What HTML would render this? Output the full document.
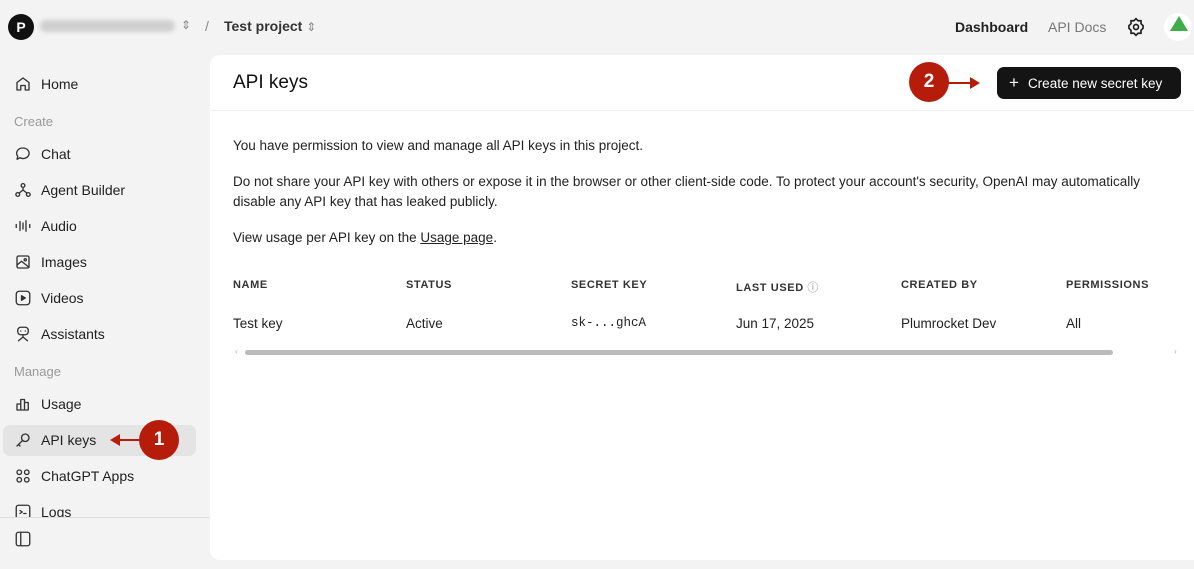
<!DOCTYPE html>
<html><head><meta charset="utf-8"><style>
*{box-sizing:border-box;margin:0;padding:0}
body{width:1194px;height:569px;background:#f3f3f3;font-family:"Liberation Sans",sans-serif;color:#1f1f1f;position:relative;overflow:hidden}
.a{position:absolute}
.nav{position:absolute;left:14px;font-size:14px;display:flex;align-items:center;gap:9px;height:20px;transform:translateY(-10px)}
.nav svg{width:18px;height:18px;fill:none;stroke:#333;stroke-width:1.8;stroke-linecap:round;stroke-linejoin:round}
.lbl{position:absolute;left:14px;font-size:13px;color:#999;transform:translateY(-8px)}
.panel{position:absolute;left:210px;top:55px;width:990px;height:505px;background:#fff;border-radius:10px 0 0 10px}
.p{position:absolute;left:23px;font-size:13.5px;color:#222;line-height:20px}
.th{position:absolute;top:224px;font-size:11px;font-weight:bold;letter-spacing:.6px;color:#333}
.td{position:absolute;top:261px;font-size:13.5px;color:#222}
.badge{position:absolute;width:40px;height:40px;border-radius:50%;background:#b51d0a;color:#fff;font-weight:bold;font-size:19px;display:flex;align-items:center;justify-content:center}
</style></head><body>
<div class="a" style="left:8px;top:14px;width:26px;height:26px;border-radius:50%;background:#111;color:#fff;font-size:14px;font-weight:bold;display:flex;align-items:center;justify-content:center">P</div>
<div class="a" style="left:40px;top:20px;width:135px;height:12px;background:#cfcfcf;border-radius:6px;filter:blur(2px)"></div>
<div class="a" style="left:181px;top:18px;font-size:12px;color:#888">⇕</div>
<div class="a" style="left:205px;top:18px;font-size:14px;color:#888">/</div>
<div class="a" style="left:224px;top:18px;font-size:14px;font-weight:bold;color:#333">Test project <span style="color:#888;font-weight:normal;font-size:12px">⇕</span></div>
<div class="a" style="left:955px;top:19px;font-size:14px;font-weight:bold;color:#222">Dashboard</div>
<div class="a" style="left:1048px;top:19px;font-size:14px;color:#777">API Docs</div>
<svg class="a" style="left:1126px;top:17px" width="20" height="20" viewBox="0 0 24 24" fill="none" stroke="#222" stroke-width="2"><circle cx="12" cy="12" r="3"/><path d="M12 2l2.5 2.5h3.5v3.5L20.5 10.5v3L18 16v3.5h-3.5L12 22l-2.5-2.5H6V16l-2.5-2.5v-3L6 8V4.5h3.5z"/></svg>
<div class="a" style="left:1164px;top:13px;width:28px;height:28px;border-radius:50%;background:#fff"></div>
<div class="a" style="left:1170px;top:16px;width:0;height:0;border-left:9px solid transparent;border-right:9px solid transparent;border-bottom:15px solid #3fae4a"></div>

<div class="nav" style="top:84px"><svg viewBox="0 0 24 24"><path d="M4 20V10l8-6 8 6v10h-5v-6H9v6z"/></svg>Home</div>
<div class="lbl" style="top:122px">Create</div>
<div class="nav" style="top:154px"><svg viewBox="0 0 24 24"><path d="M12 4a8 7 0 1 1-4 13l-4 2 1-4a8 7 0 0 1 7-11z"/></svg>Chat</div>
<div class="nav" style="top:190px"><svg viewBox="0 0 24 24"><circle cx="12" cy="6" r="2.5"/><circle cx="5" cy="18" r="2.5"/><circle cx="19" cy="18" r="2.5"/><path d="M12 9v3M7 16l5-4 5 4"/></svg>Agent Builder</div>
<div class="nav" style="top:226px"><svg viewBox="0 0 24 24"><path d="M3 10v4M8 6v12M12 8v8M16 5v14M21 10v4"/></svg>Audio</div>
<div class="nav" style="top:262px"><svg viewBox="0 0 24 24"><rect x="4" y="4" width="16" height="16" rx="2"/><circle cx="15" cy="9" r="1.5"/><path d="M4 16l6-5 10 8"/></svg>Images</div>
<div class="nav" style="top:298px"><svg viewBox="0 0 24 24"><rect x="3" y="3" width="18" height="18" rx="4"/><path d="M10 9l5 3-5 3z" fill="#333"/></svg>Videos</div>
<div class="nav" style="top:334px"><svg viewBox="0 0 24 24"><rect x="5" y="3" width="14" height="10" rx="4"/><path d="M9 8h.1M15 8h.1M12 13v3M6 21l6-5 6 5"/></svg>Assistants</div>
<div class="lbl" style="top:372px">Manage</div>
<div class="nav" style="top:404px"><svg viewBox="0 0 24 24"><path d="M4 20V12h5V20M9 20V6h5v14M14 20v-10h5v10H4"/></svg>Usage</div>
<div class="a" style="left:3px;top:425px;width:193px;height:31px;background:#e4e4e4;border-radius:7px"></div>
<div class="nav" style="top:440px"><svg viewBox="0 0 24 24"><circle cx="15" cy="9" r="5"/><path d="M11 13l-7 7M6 18l2 2"/></svg>API keys</div>
<div class="nav" style="top:476px"><svg viewBox="0 0 24 24"><circle cx="7" cy="7" r="3"/><circle cx="17" cy="7" r="3"/><circle cx="7" cy="17" r="3"/><circle cx="17" cy="17" r="3"/></svg>ChatGPT Apps</div>
<div class="a" style="left:0;top:500px;width:209px;height:18px;overflow:hidden"><div class="nav" style="top:12px"><svg viewBox="0 0 24 24"><rect x="3" y="3" width="18" height="18" rx="3"/><path d="M8 10l3 2-3 2M13 14h3"/></svg>Logs</div></div>
<div class="a" style="left:0;top:517px;width:209px;height:1px;background:#ddd"></div>
<svg class="a" style="left:14px;top:530px" width="18" height="18" viewBox="0 0 24 24" fill="none" stroke="#333" stroke-width="1.8"><rect x="3" y="3" width="18" height="18" rx="3"/><path d="M9 3v18"/></svg>
<svg class="a" style="left:108px;top:431px" width="34" height="18"><path d="M34 9H10" stroke="#b51d0a" stroke-width="2"/><path d="M2 9l10-6v12z" fill="#b51d0a"/></svg>
<div class="badge" style="left:139px;top:420px">1</div>

<div class="panel">
<div class="a" style="left:23px;top:17px;font-size:19px;color:#111">API keys</div>
<div class="a" style="left:0;top:55px;width:990px;height:1px;background:#eee"></div>
<div class="badge" style="left:699px;top:7px">2</div>
<svg class="a" style="left:738px;top:19px" width="34" height="18"><path d="M0 9h24" stroke="#b51d0a" stroke-width="2"/><path d="M32 9l-10-6v12z" fill="#b51d0a"/></svg>
<div class="a" style="left:787px;top:12px;width:184px;height:32px;background:#141414;border-radius:7px;color:#fff;font-size:13.5px;display:flex;align-items:center;padding-left:12px"><span style="font-size:17px;margin-right:9px">+</span>Create new secret key</div>
<div class="p" style="top:81px">You have permission to view and manage all API keys in this project.</div>
<div class="p" style="top:117px">Do not share your API key with others or expose it in the browser or other client-side code. To protect your account's security, OpenAI may automatically<br>disable any API key that has leaked publicly.</div>
<div class="p" style="top:173px">View usage per API key on the <u>Usage page</u>.</div>
<div class="th" style="left:23px">NAME</div>
<div class="th" style="left:196px">STATUS</div>
<div class="th" style="left:361px">SECRET KEY</div>
<div class="th" style="left:526px">LAST USED <span style="font-weight:normal;color:#888">ⓘ</span></div>
<div class="th" style="left:691px">CREATED BY</div>
<div class="th" style="left:856px">PERMISSIONS</div>
<div class="td" style="left:23px">Test key</div>
<div class="td" style="left:196px">Active</div>
<div class="td" style="left:361px;font-family:'Liberation Mono',monospace;font-size:12.5px">sk-...ghcA</div>
<div class="td" style="left:526px">Jun 17, 2025</div>
<div class="td" style="left:691px">Plumrocket Dev</div>
<div class="td" style="left:856px">All</div>
<div class="a" style="left:35px;top:295px;width:868px;height:5px;background:#bbb;border-radius:3px"></div>
<div class="a" style="left:25px;top:292px;font-size:8px;color:#aaa">‹</div>
<div class="a" style="left:964px;top:292px;font-size:8px;color:#aaa">›</div>
</div>
</body></html>
